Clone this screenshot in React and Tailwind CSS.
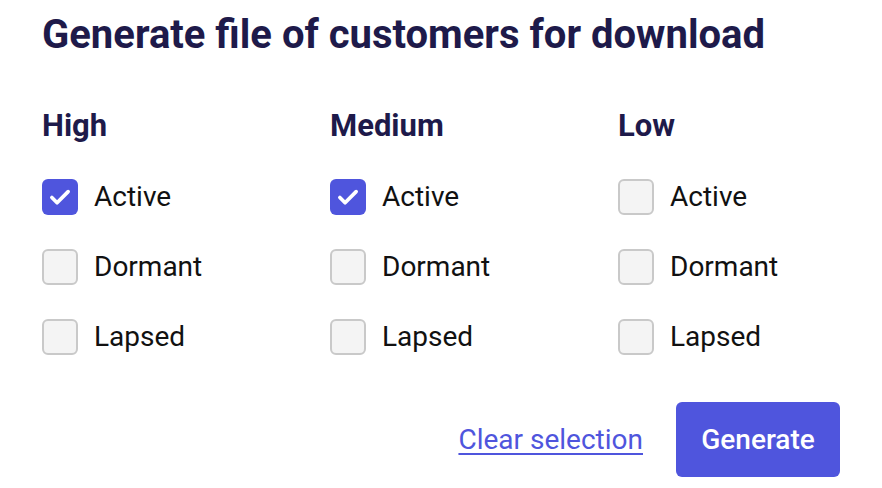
import React, { useState } from 'react';

const groups = ['High', 'Medium', 'Low'];
const statuses = ['Active', 'Dormant', 'Lapsed'];

function Checkbox({ checked, onChange, label }) {
  return (
    <label className="flex items-center gap-[16px] h-[36px] cursor-pointer select-none">
      <span
        onClick={onChange}
        className={`w-[36px] h-[36px] rounded-[6px] flex items-center justify-center shrink-0 ${
          checked ? 'bg-[#4f55dd]' : 'bg-[#f4f4f4] border-2 border-[#c9c9c9]'
        }`}
      >
        {checked && (
          <svg width="26" height="26" viewBox="0 0 24 24" fill="none">
            <path d="M4.5 12.5l4.8 4.8L19.5 7" stroke="white" strokeWidth="3.4" strokeLinecap="round" strokeLinejoin="round" />
          </svg>
        )}
      </span>
      <span className="text-[28px] text-[#111] leading-none">{label}</span>
    </label>
  );
}

export default function App() {
  const [selected, setSelected] = useState({ 'High-Active': true, 'Medium-Active': true });

  const toggle = (key) => setSelected((prev) => ({ ...prev, [key]: !prev[key] }));

  return (
    <div className="w-[882px] h-[488px] bg-white px-[42px] pt-[12px] font-['Roboto',sans-serif]">
      <h1 className="text-[40px] font-bold text-[#1e1a4a] leading-[46px]">
        Generate file of customers for download
      </h1>

      <div className="grid grid-cols-[288px_288px_1fr] mt-[51px]">
        {groups.map((group) => (
          <div key={group} className="flex flex-col">
            <h2 className="text-[31px] font-bold text-[#1e1a4a] leading-[34px]">{group}</h2>
            <div className="flex flex-col gap-[34px] mt-[36px]">
              {statuses.map((status) => {
                const key = `${group}-${status}`;
                return (
                  <Checkbox
                    key={key}
                    label={status}
                    checked={!!selected[key]}
                    onChange={() => toggle(key)}
                  />
                );
              })}
            </div>
          </div>
        ))}
      </div>

      <div className="flex justify-end items-center gap-[33px] mt-[47px]">
        <button
          onClick={() => setSelected({})}
          className="text-[28px] text-[#4f55dd] underline underline-offset-[4px] decoration-[2px] leading-none"
        >
          Clear selection
        </button>
        <button className="bg-[#4f55dd] text-white text-[28px] font-medium rounded-[6px] w-[164px] h-[75px] leading-none">
          Generate
        </button>
      </div>
    </div>
  );
}
